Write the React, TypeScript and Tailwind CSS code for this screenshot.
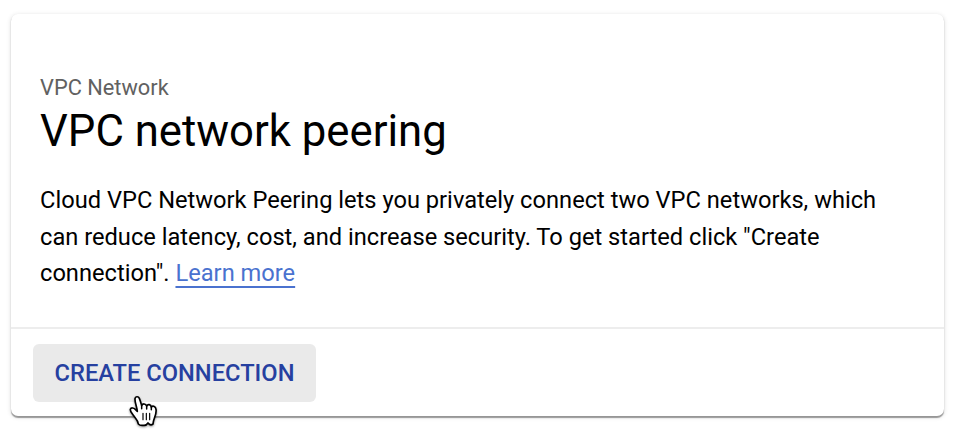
function HandCursor() {
  return (
    <svg
      className="pointer-events-none absolute top-[51px] left-[96px] h-[34px] w-[30px] drop-shadow-[0_1px_1px_rgba(0,0,0,0.4)]"
      viewBox="0 0 90 102"
      fill="none"
      strokeLinecap="round"
      strokeLinejoin="round"
      aria-hidden="true"
    >
      <path
        d="M28 87 C27 75 19 70 13 61 C8 54 3 49 4 43 C6 37 14 38 19 43 L25 49 C24 36 17 22 18 11 C19 4 28 3 31 10 C34 17 36 25 38 32 C41 25 50 25 53 33 C57 26 65 28 67 36 C72 31 80 34 81 43 C84 58 73 70 72 87 C67 91 61 89 57 84 C53 90 48 92 43 91 C36 92 32 91 28 87 Z"
        fill="white"
        stroke="black"
        strokeWidth="5"
      />
      <path d="M38 32 V41 M53 33 V42 M67 36 V44" stroke="black" strokeWidth="4.5" />
      <path d="M42 55 V74 M52 55 V74 M62 55 V74" stroke="black" strokeWidth="3.5" />
    </svg>
  );
}

export default function App() {
  return (
    <div className="h-[430px] w-[956px] overflow-hidden bg-white px-[11px] pt-[14px] font-['Roboto',sans-serif] text-black">
      <main className="flex h-[402px] w-[933px] flex-col rounded-[7px] bg-white shadow-[0_1.5px_1px_rgba(0,0,0,0.36),0_1px_5px_rgba(0,0,0,0.14)]">
        <section className="h-[315px] border-b-2 border-[#ededed] px-[29px] pt-[60px]">
          <p className="text-[21.8px] leading-[28px] text-[#616161]">VPC Network</p>
          <h1 className="mt-[3px] text-[43.7px] leading-[52px] whitespace-nowrap">VPC network peering</h1>
          <div className="mt-[25px] text-[23.67px] leading-[36.5px] whitespace-nowrap">
            <p>Cloud VPC Network Peering lets you privately connect two VPC networks, which</p>
            <p>can reduce latency, cost, and increase security. To get started click "Create</p>
            <p>
              connection".{" "}
              <a className="text-[#4a72cf] underline decoration-2 underline-offset-[5px] [text-decoration-skip-ink:none]">Learn more</a>
            </p>
          </div>
        </section>
        <footer className="px-[22px] pt-[15px]">
          <button className="relative h-[58px] w-[283px] rounded-[6px] bg-[#eaeaea] pt-[2px] text-[23.7px] font-medium text-[#2640a0]">
            <span>CREATE CONNECTION</span>
            <HandCursor />
          </button>
        </footer>
      </main>
    </div>
  );
}
